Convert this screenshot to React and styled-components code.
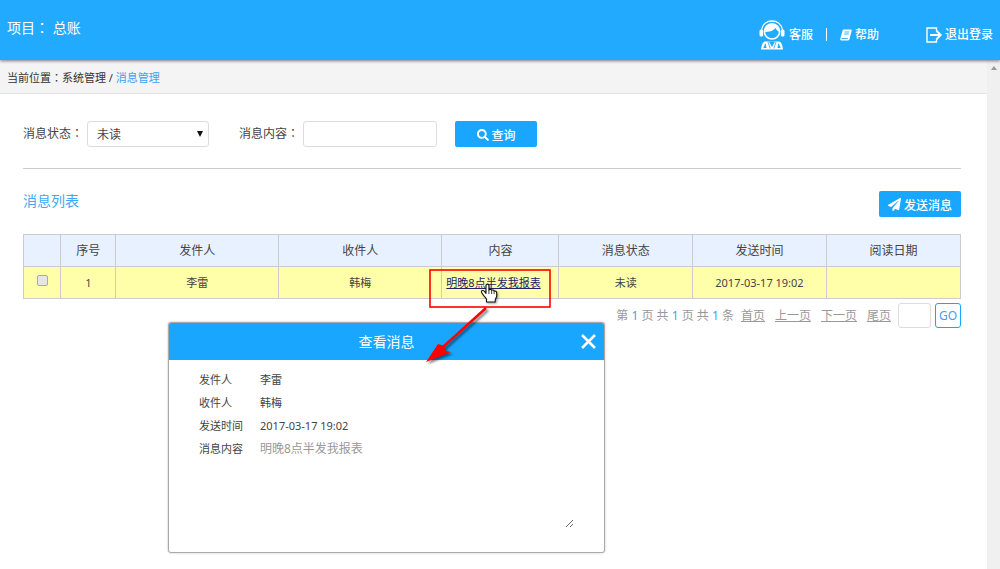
import { useState } from 'react'
import styled, { createGlobalStyle } from 'styled-components'
import { FaSearch, FaPaperPlane } from 'react-icons/fa'

const columns = [
    { label: '', width: '4%' },
    { label: '序号', width: '5.85%' },
    { label: '发件人', width: '17.4%' },
    { label: '收件人', width: '17.4%' },
    { label: '内容', width: '12.5%' },
    { label: '消息状态', width: '14.25%' },
    { label: '发送时间', width: '14.3%' },
    { label: '阅读日期', width: '14.3%' },
]

const message = {
    id: 1,
    from: '李雷',
    to: '韩梅',
    content: '明晚8点半发我报表',
    status: '未读',
    sentAt: '2017-03-17 19:02',
    readAt: '',
}

const App = () => {

    const [isOpen, setIsOpen] = useState(true)
    const [content, setContent] = useState('')

    return (
        <>
            <GlobalStyle />
            <Page>
                <Header>
                    <Project>项目<Colon>：</Colon> 总账</Project>
                    <HeaderNav>
                        <HeaderLink href="#service">
                            <ServiceIcon />
                            客服
                        </HeaderLink>
                        <Separator />
                        <HeaderLink href="#help" $gap="3px">
                            <BookIcon />
                            帮助
                        </HeaderLink>
                        <LogoutLink href="#logout" $gap="3px">
                            <LogoutIcon />
                            退出登录
                        </LogoutLink>
                    </HeaderNav>
                </Header>

                <Body>
                    <Content>
                        <Breadcrumb>
                            当前位置<Colon>：</Colon>系统管理 / <a href="#messages">消息管理</a>
                        </Breadcrumb>

                        <Main>
                            <Filters onSubmit={(e) => e.preventDefault()}>
                                <label htmlFor="status">消息状态<Colon>：</Colon></label>
                                <SelectWrap>
                                    <Select id="status" defaultValue="未读">
                                        <option>未读</option>
                                        <option>已读</option>
                                    </Select>
                                    <svg width="6" height="6" viewBox="0 0 6 6"><path d="M0 0h6L3 6z" fill="#111" /></svg>
                                </SelectWrap>
                                <label htmlFor="content">消息内容<Colon>：</Colon></label>
                                <TextInput id="content" value={content} onChange={(e) => setContent(e.target.value)} />
                                <Button type="submit">
                                    <FaSearch size={12} />
                                    查询
                                </Button>
                            </Filters>

                            <ListHeader>
                                <h2>消息列表</h2>
                                <Button type="button">
                                    <FaPaperPlane size={13} />
                                    发送消息
                                </Button>
                            </ListHeader>

                            <Table>
                                <colgroup>
                                    {columns.map((c, i) => <Col key={i} $width={c.width} />)}
                                </colgroup>
                                <thead>
                                    <tr>
                                        {columns.map((c, i) => <th key={i}>{c.label}</th>)}
                                    </tr>
                                </thead>
                                <tbody>
                                    <tr>
                                        <td><Checkbox type="checkbox" aria-label="选择" /></td>
                                        <td>{message.id}</td>
                                        <td>{message.from}</td>
                                        <td>{message.to}</td>
                                        <ContentCell>
                                            <MessageLink href="#message" onClick={() => setIsOpen(true)}>{message.content}</MessageLink>
                                        </ContentCell>
                                        <td>{message.status}</td>
                                        <td>{message.sentAt}</td>
                                        <td>{message.readAt}</td>
                                    </tr>
                                </tbody>
                            </Table>

                            <Pagination>
                                <Totals>第 <b>1</b> 页 共 <b>1</b> 页 共 <b>1</b> 条</Totals>
                                <PageLinks>
                                    <a href="#first">首页</a>
                                    <a href="#prev">上一页</a>
                                    <a href="#next">下一页</a>
                                    <a href="#last">尾页</a>
                                </PageLinks>
                                <PageInput aria-label="页码" />
                                <GoButton type="button">GO</GoButton>
                            </Pagination>
                        </Main>
                    </Content>
                    <ScrollTrack>
                        <svg width="6" height="4" viewBox="0 0 6 4"><path d="M3 0l3 4H0z" fill="#999" /></svg>
                    </ScrollTrack>
                </Body>

                {isOpen && (
                    <Dialog role="dialog" aria-labelledby="dialog-title">
                        <DialogHeader>
                            <h3 id="dialog-title">查看消息</h3>
                            <CloseButton type="button" aria-label="关闭" onClick={() => setIsOpen(false)}>
                                <svg width="15" height="15" viewBox="0 0 15 15"><path d="M1 1l13 13M14 1L1 14" stroke="#fff" strokeWidth="2.600" /></svg>
                            </CloseButton>
                        </DialogHeader>
                        <Details>
                            <span>发件人</span>
                            <span>{message.from}</span>
                            <span>收件人</span>
                            <span>{message.to}</span>
                            <span>发送时间</span>
                            <span>{message.sentAt}</span>
                            <label htmlFor="detail">消息内容</label>
                            <Detail id="detail" readOnly value={message.content} />
                        </Details>
                    </Dialog>
                )}

                <Annotation />
            </Page>
        </>
    )
}

export default App

const ServiceIcon = () => (
    <svg width="26" height="30" viewBox="0 0 26 30" fill="none">
        <path d="M2.500 10C3.500 4 8 1 13 1s9.500 3 10.500 9" stroke="#fff" strokeWidth="1.300" />
        <circle cx="13" cy="11.500" r="7.600" stroke="#fff" strokeWidth="1.500" />
        <path d="M5.500 12C5.500 6.500 9 3.600 13 3.600s7.500 2.900 7.500 8.400c-1.800-.8-3.200-2.200-4-4C14 11 10 12 5.500 12z" fill="#fff" />
        <rect x="0.500" y="9.500" width="3.700" height="7" rx="1.500" fill="#fff" />
        <rect x="21.800" y="9.500" width="3.700" height="7" rx="1.500" fill="#fff" />
        <path d="M6 21.500h14c2 0 3.300 3 4 8H2c.7-5 2-8 4-8z" fill="#fff" />
        <path d="M6.500 23l-2.200 5h3.200zM19.500 23l2.200 5h-3.200zM10 21.500h6L13 27z" fill="#22aaff" />
        <path d="M9 22l2.200 6.500M17 22l-2.200 6.500" stroke="#22aaff" strokeWidth="0.800" />
    </svg>
)

const BookIcon = () => (
    <svg width="12" height="12" viewBox="0 0 12 12" fill="none">
        <path d="M3.800 0.500h7.200c.6 0 .9.500.7 1.100L9.500 10.300c-.2.700-.7 1.100-1.400 1.100H1.600C.5 11.400 0 10.600.3 9.700L2.600 1.400C2.700.9 3.200.5 3.800.5z" fill="#fff" />
        <path d="M4.600 3h4.600M4.100 5h4.600M1.600 9.500h6.200" stroke="#22aaff" strokeWidth="0.900" />
    </svg>
)

const LogoutIcon = () => (
    <svg width="16" height="16" viewBox="0 0 16 16" fill="none" stroke="#fff">
        <path d="M10.500 3.800V1H1v14h9.500v-2.800" strokeWidth="1.400" />
        <path d="M4 8h10.500M10.500 3.800L14.700 8l-4.200 4.200" strokeWidth="2" />
    </svg>
)

// red frame, arrow and hand pointer over the message link
const Annotation = () => (
    <Overlay width="132" height="100" viewBox="0 0 132 100" fill="none">
        <rect x="10" y="2" width="120" height="37" stroke="#f00" strokeWidth="1.600" />
        <g className="arrow">
            <path d="M66 40L23 79" stroke="#f00" strokeWidth="2.500" />
            <path d="M6 94L18 76l6 2 1.500 5 5.500 1z" fill="#f00" />
        </g>
        <g className="hand">
            <path
                d="M66.500 34v-3c-1-1.500-2.500-3-3.500-4.500-1-1.300-2-2.600-1.500-3.400.7-1 2.200-.6 3.200.6l1.300 1.600V17.500c0-1.900 2.800-1.900 2.900 0V22c.6-1 2.400-.8 2.700.4.800-.8 2.300-.4 2.500.8 1-.6 2.600 0 2.600 1.600v3.200c0 1.500-1.400 2.600-1.500 4v2z"
                fill="#fff" stroke="#111" strokeWidth="1.100" strokeLinejoin="round"
            />
            <path d="M68.900 22v4M71.600 22.500v3.500M74.100 23.300v2.700" stroke="#111" strokeWidth="0.800" />
        </g>
    </Overlay>
)

const GlobalStyle = createGlobalStyle`
    * {
        box-sizing: border-box;
    }

    body {
        margin: 0;
        color: #444;
        font-family: "Noto Sans", "Noto Sans CJK SC", sans-serif;
        font-size: 12px;
        line-height: 18px;
    }

    input, select, textarea, button {
        font-family: inherit;
        font-size: 12px;
        color: inherit;
        margin: 0;
    }
`
const Page = styled.div`
    position: relative;
    display: flex;
    flex-direction: column;
    min-height: 100vh;
    background: #fff;
    overflow: hidden;
`
/* full-width colon centred in its box */
const Colon = styled.span`
    font-family: "Noto Sans CJK TC", sans-serif;
    line-height: 1;
`
const Header = styled.header`
    position: relative;
    z-index: 1;
    display: flex;
    justify-content: space-between;
    height: 60px;
    padding: 0 7px;
    color: #fff;
    background: #22aaff;
    box-shadow: 0 1px 3px rgba(0, 0, 0, 0.5);
`
const Project = styled.div`
    padding-top: 19px;
    font-size: 14px;
`
const HeaderNav = styled.nav`
    display: flex;
    align-items: center;
    padding-top: 9px;
`
const HeaderLink = styled.a`
    display: flex;
    align-items: center;
    gap: ${(p) => p.$gap || '4px'};
    color: #fff;
    font-weight: 500;
    text-decoration: none;
`
const LogoutLink = styled(HeaderLink)`
    margin-left: 47px;
`
const Separator = styled.span`
    width: 1px;
    height: 13px;
    margin: 0 13px;
    background: #fff;
`
const Body = styled.div`
    display: flex;
    flex: 1;
`
const Content = styled.div`
    flex: 1;
`
const Breadcrumb = styled.div`
    height: 34px;
    padding: 0 7px;
    border-bottom: 1px solid #e2e2e2;
    color: #333;
    background: #f4f4f4;
    font-size: 11px;
    line-height: 36px;

    > a {
        color: #3fa0f5;
        text-decoration: none;
    }
`
const ScrollTrack = styled.div`
    width: 13px;
    padding: 6px 4px;
    background: #f0f0f0;
    line-height: 0;
`
const Main = styled.main`
    padding: 0 26px 24px 23px;
`
const Filters = styled.form`
    display: flex;
    align-items: center;
    padding: 27px 0 21px;
    border-bottom: 1px solid #ccc;

    > label {
        margin-right: 4px;
    }
`
const SelectWrap = styled.div`
    position: relative;
    margin-right: 30px;

    > svg {
        position: absolute;
        right: 6px;
        top: 10px;
        pointer-events: none;
    }
`
const Select = styled.select`
    display: block;
    width: 122px;
    height: 26px;
    padding: 1px 9px 0;
    border: 1px solid #ddd;
    border-radius: 3px;
    background: #fff;
    appearance: none;
`
const TextInput = styled.input`
    width: 134px;
    height: 26px;
    margin-right: 18px;
    padding: 0 8px;
    border: 1px solid #ddd;
    border-radius: 3px;
`
const Button = styled.button`
    display: flex;
    align-items: center;
    justify-content: center;
    gap: 3px;
    width: 82px;
    height: 26px;
    padding: 1px 0 0;
    border: none;
    border-radius: 2px;
    color: #fff;
    background: #18a6ff;
    font-weight: 500;
    cursor: pointer;
`
const ListHeader = styled.div`
    display: flex;
    justify-content: space-between;
    padding: 22px 0 17px;

    > h2 {
        margin: 0;
        color: #3fa9f5;
        font-size: 14px;
        font-weight: 400;
        line-height: 20px;
    }
`
const Table = styled.table`
    width: 100%;
    table-layout: fixed;
    border-collapse: collapse;
    text-align: center;

    th, td {
        height: 32px;
        padding: 0;
        border: 1px solid #ccc;
    }

    th {
        background: #e8f1ff;
        font-weight: 400;
    }

    td {
        background: #ffffaa;
        font-size: 11px;
    }

    td:nth-child(5) {
        padding-left: 4px;
    }
`
const Col = styled.col`
    width: ${(p) => p.$width};
`
const ContentCell = styled.td`
    text-align: left;
`
const Checkbox = styled.input`
    display: block;
    width: 11px;
    height: 11px;
    margin: 0 auto 4px;
    border: 1px solid #aaa;
    border-radius: 2px;
    background: #e6e6e6;
    appearance: none;

    &:checked {
        background: #18a6ff;
    }
`
const MessageLink = styled.a`
    color: #22226a;
`
const Pagination = styled.div`
    display: flex;
    align-items: center;
    justify-content: flex-end;
    padding-top: 4px;
    color: #999;
`
const Totals = styled.span`
    margin-right: 7px;

    > b {
        color: #3fa0f5;
        font-weight: 400;
    }
`
const PageLinks = styled.nav`
    display: flex;
    gap: 10px;
    margin-right: 7px;

    > a {
        color: #999;
    }
`
const PageInput = styled.input`
    width: 33px;
    height: 25px;
    margin-right: 4px;
    border: 1px solid #ddd;
    border-radius: 3px;
`
const GoButton = styled.button`
    width: 26px;
    height: 25px;
    padding: 0;
    border: 1px solid #18a6ff;
    border-radius: 3px;
    color: #3fa0f5;
    background: #fff;
`
const Dialog = styled.section`
    position: absolute;
    top: 322px;
    left: 168px;
    width: 437px;
    border: 1px solid #aaa;
    border-radius: 3px;
    background: #fff;
    box-shadow: 0 0 2px rgba(0, 0, 0, 0.3);
    overflow: hidden;
`
const DialogHeader = styled.div`
    display: grid;
    grid-template-columns: 32px 1fr 32px;
    align-items: center;
    height: 37px;
    color: #fff;
    background: #18a6ff;

    > h3 {
        grid-column: 2;
        margin: 0;
        font-size: 14px;
        font-weight: 400;
        text-align: center;
    }
`
const CloseButton = styled.button`
    display: flex;
    align-items: center;
    justify-content: center;
    height: 34px;
    padding: 0;
    border: none;
    background: none;
    cursor: pointer;
`
const Details = styled.div`
    display: grid;
    grid-template-columns: 61px 1fr;
    row-gap: 5px;
    padding: 11px 30px 24px;
    font-size: 11px;
`
const Detail = styled.textarea`
    display: block;
    width: 100%;
    height: 88px;
    padding: 0;
    border: none;
    outline: none;
    color: #999;
    line-height: 18px;
    resize: vertical;
`
const Overlay = styled.svg`
    position: absolute;
    top: 268px;
    left: 420px;
    pointer-events: none;

    > .arrow {
        filter: drop-shadow(2px 2px 1px rgba(0, 0, 0, 0.5));
    }

    > .hand {
        filter: drop-shadow(1px 1px 1px rgba(0, 0, 0, 0.4));
    }
`
